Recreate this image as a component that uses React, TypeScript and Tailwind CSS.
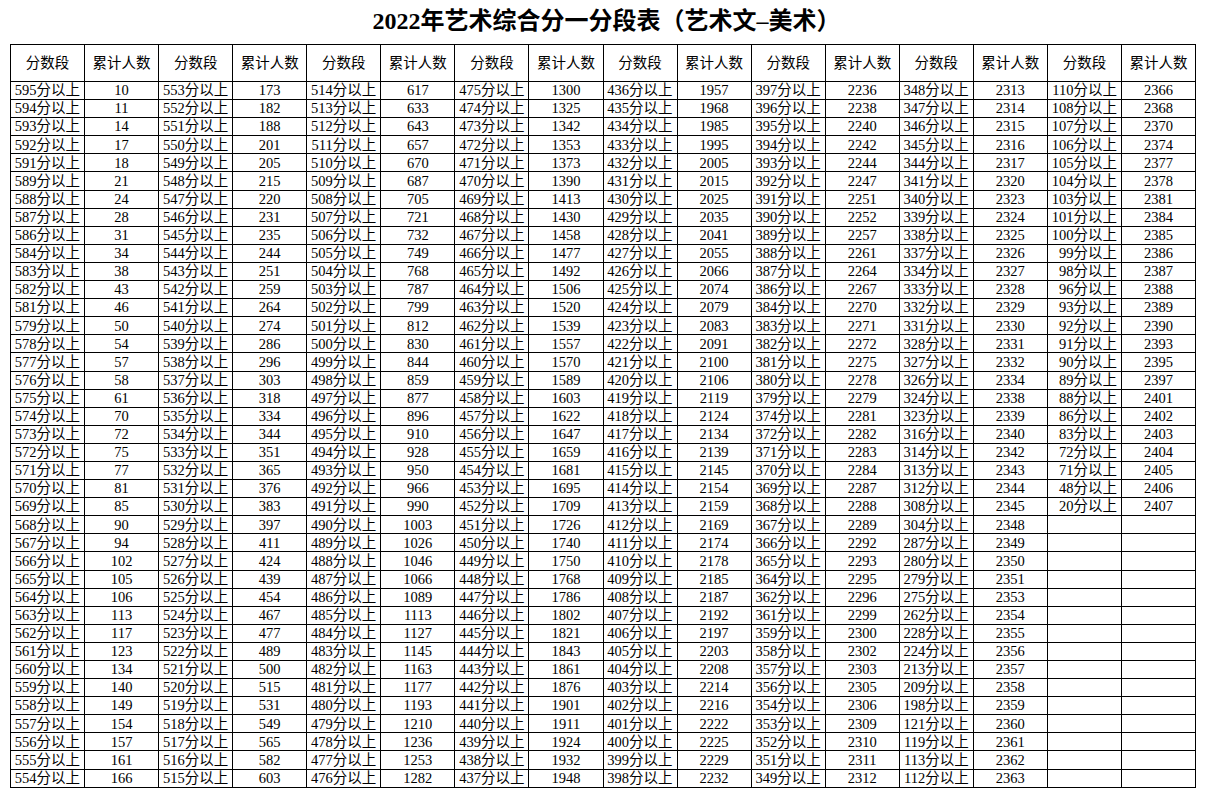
import React from 'react'

// 每一组：分数段 累计人数
const groups: string[] = [
  '595 10,594 11,593 14,592 17,591 18,589 21,588 24,587 28,586 31,584 34,583 38,582 43,581 46,579 50,578 54,577 57,576 58,575 61,574 70,573 72,572 75,571 77,570 81,569 85,568 90,567 94,566 102,565 105,564 106,563 113,562 117,561 123,560 134,559 140,558 149,557 154,556 157,555 161,554 166',
  '553 173,552 182,551 188,550 201,549 205,548 215,547 220,546 231,545 235,544 244,543 251,542 259,541 264,540 274,539 286,538 296,537 303,536 318,535 334,534 344,533 351,532 365,531 376,530 383,529 397,528 411,527 424,526 439,525 454,524 467,523 477,522 489,521 500,520 515,519 531,518 549,517 565,516 582,515 603',
  '514 617,513 633,512 643,511 657,510 670,509 687,508 705,507 721,506 732,505 749,504 768,503 787,502 799,501 812,500 830,499 844,498 859,497 877,496 896,495 910,494 928,493 950,492 966,491 990,490 1003,489 1026,488 1046,487 1066,486 1089,485 1113,484 1127,483 1145,482 1163,481 1177,480 1193,479 1210,478 1236,477 1253,476 1282',
  '475 1300,474 1325,473 1342,472 1353,471 1373,470 1390,469 1413,468 1430,467 1458,466 1477,465 1492,464 1506,463 1520,462 1539,461 1557,460 1570,459 1589,458 1603,457 1622,456 1647,455 1659,454 1681,453 1695,452 1709,451 1726,450 1740,449 1750,448 1768,447 1786,446 1802,445 1821,444 1843,443 1861,442 1876,441 1901,440 1911,439 1924,438 1932,437 1948',
  '436 1957,435 1968,434 1985,433 1995,432 2005,431 2015,430 2025,429 2035,428 2041,427 2055,426 2066,425 2074,424 2079,423 2083,422 2091,421 2100,420 2106,419 2119,418 2124,417 2134,416 2139,415 2145,414 2154,413 2159,412 2169,411 2174,410 2178,409 2185,408 2187,407 2192,406 2197,405 2203,404 2208,403 2214,402 2216,401 2222,400 2225,399 2229,398 2232',
  '397 2236,396 2238,395 2240,394 2242,393 2244,392 2247,391 2251,390 2252,389 2257,388 2261,387 2264,386 2267,384 2270,383 2271,382 2272,381 2275,380 2278,379 2279,374 2281,372 2282,371 2283,370 2284,369 2287,368 2288,367 2289,366 2292,365 2293,364 2295,362 2296,361 2299,359 2300,358 2302,357 2303,356 2305,354 2306,353 2309,352 2310,351 2311,349 2312',
  '348 2313,347 2314,346 2315,345 2316,344 2317,341 2320,340 2323,339 2324,338 2325,337 2326,334 2327,333 2328,332 2329,331 2330,328 2331,327 2332,326 2334,324 2338,323 2339,316 2340,314 2342,313 2343,312 2344,308 2345,304 2348,287 2349,280 2350,279 2351,275 2353,262 2354,228 2355,224 2356,213 2357,209 2358,198 2359,121 2360,119 2361,113 2362,112 2363',
  '110 2366,108 2368,107 2370,106 2374,105 2377,104 2378,103 2381,101 2384,100 2385,99 2386,98 2387,96 2388,93 2389,92 2390,91 2393,90 2395,89 2397,88 2401,86 2402,83 2403,72 2404,71 2405,48 2406,20 2407',
]

const ROWS = 39
const data = groups.map((g) => g.split(',').map((p) => p.split(' ')))

const cell = 'border-r border-b border-black flex items-center leading-none text-[14.5px]'

export default function App() {
  const rows = []
  for (let r = 0; r < ROWS; r++) {
    for (let g = 0; g < data.length; g++) {
      const item = data[g][r]
      rows.push(
        <div key={`s${r}-${g}`} className={`${cell} justify-end pr-[4px]`}>
          {item ? `${item[0]}分以上` : ''}
        </div>,
        <div key={`c${r}-${g}`} className={`${cell} justify-center`}>
          {item ? item[1] : ''}
        </div>
      )
    }
  }

  return (
    <div className="w-[1213px] h-[797px] bg-white text-black font-['Liberation_Serif','Noto_Sans_CJK_SC',serif]">
      <h1 className="h-[44px] flex items-center justify-center pb-[3px] text-[24px] font-bold leading-none">
        2022年艺术综合分一分段表（艺术文–美术）
      </h1>

      <div className="ml-[10px] w-[1186px] grid grid-cols-16 grid-rows-[37px_repeat(39,18.1px)] border-l border-t border-black">
        {data.map((_, g) => (
          <React.Fragment key={`h${g}`}>
            <div className={`${cell} justify-center`}>分数段</div>
            <div className={`${cell} justify-center`}>累计人数</div>
          </React.Fragment>
        ))}
        {rows}
      </div>
    </div>
  )
}
